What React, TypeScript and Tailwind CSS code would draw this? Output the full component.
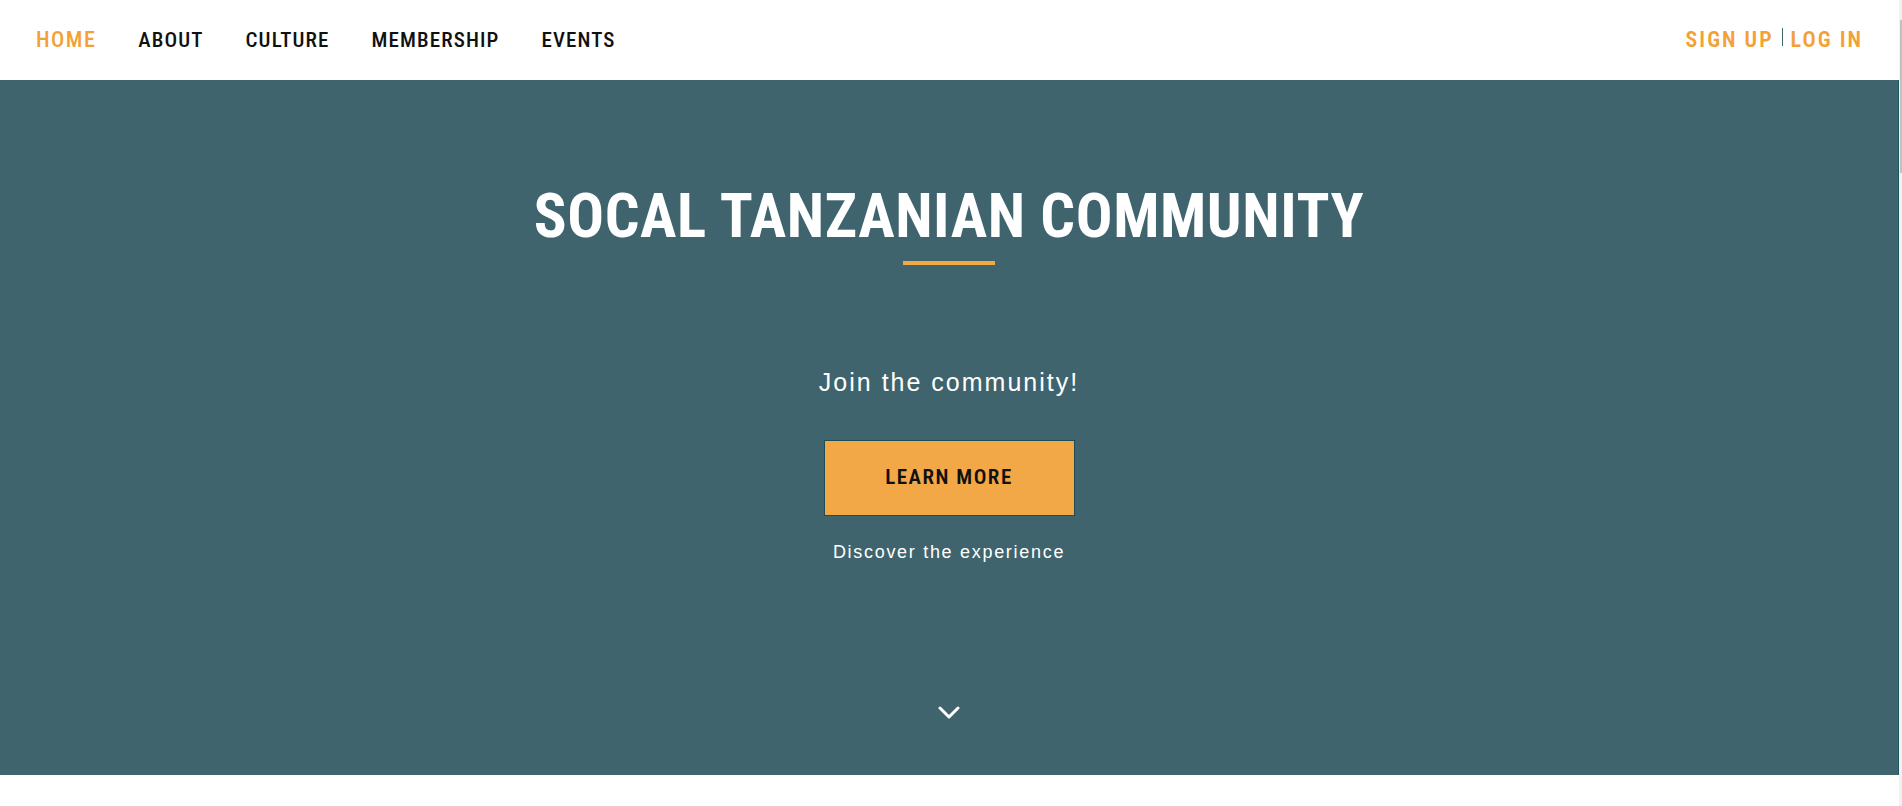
import React from "react";

const condensed = "font-['Roboto_Condensed','Liberation_Sans_Narrow','DejaVu_Sans_Condensed',Roboto,sans-serif]";
const arial = "font-['Liberation_Sans',Arial,sans-serif]";

const navLinks = ["HOME", "ABOUT", "CULTURE", "MEMBERSHIP", "EVENTS"];

const NavBar: React.FC = () => (
  <header className="h-[80px] bg-white flex items-center justify-between pl-[36px] pr-[36px]">
    <nav className={`flex items-center gap-[42px] ${condensed}`}>
      {navLinks.map((link, i) => (
        <a
          key={link}
          href="#"
          className={`leading-none ${
            i === 0
              ? "text-[22px] font-medium tracking-[1.5px] text-[#f3a136]"
              : "text-[21px] font-medium tracking-[1.1px] text-[#111111]"
          }`}
        >
          {link}
        </a>
      ))}
    </nav>
    <div className={`flex items-center ${condensed}`}>
      <a href="#" className="text-[22px] font-semibold tracking-[2px] leading-none text-[#f3a136]">
        SIGN UP
      </a>
      <span className="mx-[8px] w-px h-[18px] bg-[#3e6470] -translate-y-[3px]" />
      <a href="#" className="text-[22px] font-semibold tracking-[2px] leading-none text-[#f3a136]">
        LOG IN
      </a>
    </div>
  </header>
);

const Hero: React.FC = () => (
  <section className="h-[695px] bg-[#3f646d] border-r border-[#1d5560] flex flex-col items-center">
    <h1 className={`mt-[106px] text-[61px] font-bold tracking-[0.6px] leading-none text-white ${condensed}`}>
      SOCAL TANZANIAN COMMUNITY
    </h1>
    <div className="mt-[14px] w-[92px] h-[4px] bg-[#f2a843]" />
    <p className={`mt-[105px] text-[25px] tracking-[2px] leading-none text-white ${arial}`}>
      Join the community!
    </p>
    <button
      className={`mt-[45px] w-[251px] h-[76px] bg-[#f3a847] border border-[#1f4d57] text-[21px] font-semibold tracking-[1.5px] text-[#111111] ${condensed}`}
    >
      LEARN MORE
    </button>
    <p className={`mt-[27px] text-[18px] tracking-[1.7px] leading-none text-white ${arial}`}>
      Discover the experience
    </p>
    <svg
      className="mt-[145px]"
      width="22"
      height="14"
      viewBox="0 0 22 14"
      fill="none"
      stroke="white"
      strokeWidth="3"
      strokeLinecap="round"
      strokeLinejoin="round"
    >
      <path d="M2 2l9 9 9-9" />
    </svg>
  </section>
);

export default function App() {
  return (
    <div className="flex w-full h-[806px] bg-white overflow-hidden">
      <main className="flex-1 flex flex-col">
        <NavBar />
        <Hero />
      </main>
      <div className="w-[3px] bg-[#f1f1f1] flex flex-col">
        <div className="mt-[20px] h-[153px] w-[2px] ml-px bg-[#c1c1c1]" />
      </div>
    </div>
  );
}
